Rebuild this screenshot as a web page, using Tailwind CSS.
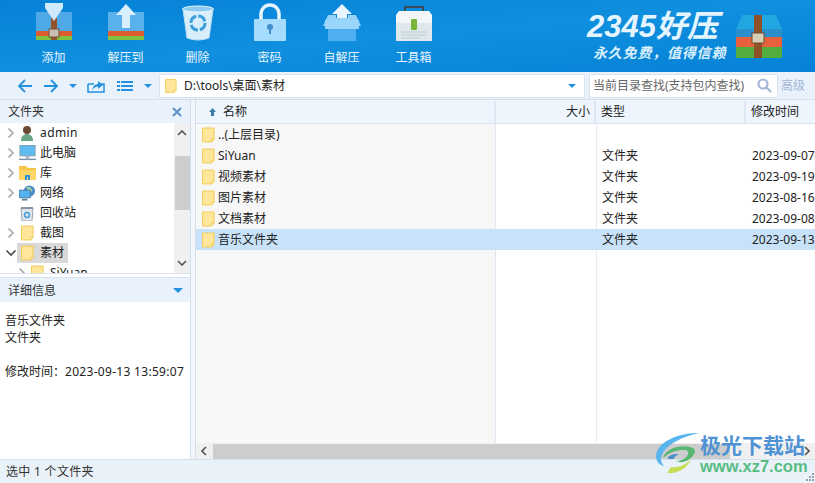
<!DOCTYPE html>
<html lang="zh"><head><meta charset="utf-8">
<script src="https://cdn.jsdelivr.net/npm/@tailwindcss/browser@4"></script>
</head>
<body class="w-[815px] h-[483px] overflow-hidden relative bg-white text-[12px] text-[#1a1a1a] font-['Noto_Sans','Noto_Sans_CJK_SC',sans-serif]">
<svg class="hidden"><defs>
<symbol id="folder" viewBox="0 0 14 16"><path d="M.5.5h12.5v12.5l-2.5 2.5H.5z" fill="#ffe69b" stroke="#f1c94f"/><path d="M10.5 15.5v-3h2.5" fill="#fff3c4" stroke="#f1c94f"/></symbol>
<symbol id="chev" viewBox="0 0 8 12"><path d="M1.5 1.5 6 6l-4.500 4.500" fill="none" stroke="#a6a6a6" stroke-width="1.600"/></symbol>
</defs></svg>
<div class="flex flex-col h-full">
 <!-- toolbar -->
 <header class="h-[72px] bg-linear-to-br from-[#0681d6] via-[#0f8fde] to-[#0681d6] flex pl-[26px] relative shrink-0">
  <div class="w-[55px] flex flex-col items-center"><svg width="38" height="40" viewBox="0 0 38 40" class="mt-[2px]"><rect x="1" y="10" width="36" height="20" fill="#4fa9e6"/><rect x="1" y="29" width="36" height="5" fill="#dc5c2e"/><rect x="1" y="34" width="36" height="4" fill="#7fc241"/><rect x="16" y="16" width="6" height="22" fill="#94522a"/><rect x="14" y="27" width="10" height="8" fill="#c8bfb0" stroke="#70503a"/><path d="M10 1h18v5l-9 13-9-13z" fill="#cfeafc"/></svg><span class="text-[#e9f5fd] leading-[14px] mt-[9px]">添加</span></div>
  <div class="w-[17px]"></div>
  <div class="w-[55px] flex flex-col items-center"><svg width="38" height="40" viewBox="0 0 38 40" class="mt-[2px]"><rect x="1" y="10" width="36" height="20" fill="#58b1ea"/><rect x="1" y="29" width="36" height="5" fill="#dc5c2e"/><rect x="1" y="34" width="36" height="4" fill="#7fc241"/><path d="M19 2l10 11h-6v13h-8V13H9z" fill="#d9effd"/></svg><span class="text-[#e9f5fd] leading-[14px] mt-[9px]">解压到</span></div>
  <div class="w-[17px]"></div>
  <div class="w-[55px] flex flex-col items-center"><svg width="34" height="38" viewBox="0 0 34 38" class="mt-[3px]"><path d="M2 6h30l-4 29q-11 4-22 0z" fill="#d9eefb" stroke="#bfe0f5"/><ellipse cx="17" cy="6" rx="15.500" ry="3" fill="#8ecbf0" stroke="#e6f4fc"/><circle cx="17" cy="20" r="7" fill="none" stroke="#3d9edd" stroke-width="3" stroke-dasharray="9 2"/></svg><span class="text-[#e9f5fd] leading-[14px] mt-[10px]">删除</span></div>
  <div class="w-[17px]"></div>
  <div class="w-[55px] flex flex-col items-center"><svg width="34" height="38" viewBox="0 0 34 38" class="mt-[3px]"><path d="M8 18V11a9 9 0 0 1 18 0v7" fill="none" stroke="#e6f4fc" stroke-width="3.500"/><rect x="1" y="16" width="32" height="22" rx="1" fill="#a5dcfd"/><circle cx="17" cy="24" r="3" fill="#3f8fca"/><rect x="16" y="25" width="2" height="6" fill="#3f8fca"/></svg><span class="text-[#e9f5fd] leading-[14px] mt-[10px]">密码</span></div>
  <div class="w-[17px]"></div>
  <div class="w-[55px] flex flex-col items-center"><svg width="42" height="38" viewBox="0 0 42 38" class="mt-[3px]"><path d="M21 1l10 10h-5v6H16v-6h-5z" fill="#e9f6fe"/><path d="M7 12l-5 11h38l-5-11h-8v3H15v-3z" fill="#94d2fa"/><rect x="7" y="23" width="28" height="15" fill="#4eaeef"/><rect x="4" y="17" width="34" height="9" fill="#9ad6fc"/></svg><span class="text-[#e9f5fd] leading-[14px] mt-[10px]">自解压</span></div>
  <div class="w-[17px]"></div>
  <div class="w-[55px] flex flex-col items-center"><svg width="38" height="38" viewBox="0 0 38 38" class="mt-[3px]"><path d="M10 9V4h18v5" fill="none" stroke="#3c4a5a" stroke-width="2"/><path d="M1 12l3-4h30l3 4v8H1z" fill="#f2f6f8"/><rect x="1" y="20" width="36" height="20" fill="#dfe8ec"/><rect x="16" y="16" width="6" height="11" rx="1" fill="#79b637"/><path d="M6 29h26M6 32h26M6 35h20" stroke="#c0ccd2"/></svg><span class="text-[#e9f5fd] leading-[14px] mt-[10px]">工具箱</span></div>
  <!-- brand -->
  <div class="absolute left-[587px] top-[11px] flex">
    <div class="w-[140px] flex flex-col">
     <span class="text-[#e4f5ff] text-[31px] leading-[32px] font-bold italic whitespace-nowrap font-['Liberation_Sans','Noto_Sans_CJK_SC',sans-serif]">2345好压</span>
     <span class="text-[#d8effd] text-[14px] leading-[18px] mt-[1px] ml-[6px] tracking-[0.8px] font-bold italic whitespace-nowrap">永久免费，值得信赖</span>
    </div>
    <svg width="48" height="46" viewBox="0 0 48 46" class="ml-[8px] mt-[4px]"><path d="M7 0h34l6 14H1z" fill="#20a7e2"/><rect x="1" y="14" width="46" height="9" fill="#2a8fcb"/><rect x="1" y="22" width="46" height="10" rx="1" fill="#e8603c"/><rect x="1" y="32" width="46" height="11" rx="1" fill="#52ad3c"/><rect x="19" y="0" width="8" height="43" fill="#8f5128"/><rect x="17" y="18" width="12" height="10" fill="#d9cfb9" stroke="#6d4a2e"/></svg>
  </div>
 </header>
 <!-- nav -->
 <div class="h-[28px] bg-[#e9f2fb] flex items-center shrink-0 border-b border-[#d5e0ec]">
  <svg width="16" height="14" viewBox="0 0 16 14" class="ml-[17px]" fill="none" stroke="#2490e0" stroke-width="1.800"><path d="M15 7H2M8 1 2 7l6 6"/></svg>
  <svg width="16" height="14" viewBox="0 0 16 14" class="ml-[10px]" fill="none" stroke="#2490e0" stroke-width="1.800"><path d="M1 7h13M8 1l6 6-6 6"/></svg>
  <svg width="8" height="4" viewBox="0 0 8 4" class="ml-[10px]"><path d="M0 0h8L4 4z" fill="#2490e0"/></svg>
  <svg width="18" height="14" viewBox="0 0 18 14" class="ml-[10px]"><path d="M1 5v8h16V5h-3M7 5H1" fill="none" stroke="#2490e0" stroke-width="1.500"/><path d="M5 11c1-4 3-6 6-6V2l5 4-5 4V7.500c-2 0-4 1-6 3.500z" fill="#2490e0"/></svg>
  <svg width="16" height="10" viewBox="0 0 16 10" class="ml-[12px]" fill="#2490e0"><path d="M0 0h3v2H0zM4 0h12v2H4zM0 4h3v2H0zM4 4h12v2H4zM0 8h3v2H0zM4 8h12v2H4z"/></svg>
  <svg width="8" height="4" viewBox="0 0 8 4" class="ml-[11px]"><path d="M0 0h8L4 4z" fill="#2490e0"/></svg>
  <div class="ml-[7px] w-[426px] h-[24px] bg-white border border-[#d8e3ef] flex items-center pl-[5px] pr-[8px]">
   <svg width="12" height="16"><use href="#folder"/></svg>
   <span class="ml-[7px] text-[#222]">D:\tools\桌面\素材</span>
   <svg width="8" height="4" viewBox="0 0 8 4" class="ml-auto"><path d="M0 0h8L4 4z" fill="#2490e0"/></svg>
  </div>
  <div class="ml-[4px] w-[189px] h-[24px] bg-white border border-[#d8e3ef] flex items-center pl-[3px] pr-[5px]">
   <span class="text-[#666] whitespace-nowrap">当前目录查找(支持包内查找)</span>
   <svg width="15" height="15" viewBox="0 0 15 15" class="ml-auto" fill="none" stroke="#a5b6da" stroke-width="2.200"><circle cx="6" cy="6" r="4.500"/><path d="M9.500 9.500 14 14"/></svg>
  </div>
  <span class="ml-[3px] text-[#a3b6d8]">高级</span>
 </div>
 <!-- body -->
 <div class="flex-1 flex min-h-0">
  <aside class="w-[191px] shrink-0 flex flex-col border-r border-[#d3dfec] bg-white">
   <div class="h-[23px] bg-[#e9f2fb] flex items-center justify-between pl-[8px] pr-[8px] pt-[1px] shrink-0"><span class="text-[#333]">文件夹</span><svg width="10" height="10" viewBox="0 0 10 10" stroke="#5b8fc4" stroke-width="2"><path d="M1 1l8 8M9 1 1 9"/></svg></div>
   <div class="h-[150px] flex shrink-0 overflow-hidden">
    <div class="w-[174px] pt-0 overflow-hidden text-[#222]">
     <div class="h-[20px] flex items-center"><svg width="8" height="12" class="ml-[7px]"><use href="#chev"/></svg><svg width="16" height="16" viewBox="0 0 16 16" class="ml-[4px]"><circle cx="8" cy="5" r="4" fill="#6b4a32"/><path d="M2 16c0-5 3-7 6-7s6 2 6 7z" fill="#6aa686"/></svg><span class="ml-[5px] tracking-[0.4px]">admin</span></div>
     <div class="h-[20px] flex items-center"><svg width="8" height="12" class="ml-[7px]"><use href="#chev"/></svg><svg width="17" height="16" viewBox="0 0 18 16" class="ml-[4px]"><rect x="1" y="0" width="16" height="11" fill="#5ebcf0" stroke="#7a9cb8"/><path d="M0 14h18v1.500H0z" fill="#7a93a8"/><path d="M7 11h4v3H7z" fill="#a7b8c6"/></svg><span class="ml-[4px]">此电脑</span></div>
     <div class="h-[20px] flex items-center"><svg width="8" height="12" class="ml-[7px]"><use href="#chev"/></svg><svg width="17" height="14" viewBox="0 0 17 14" class="ml-[4px]"><path d="M0 0h7l2 2h8v12H0z" fill="#f7c548"/><path d="M0 4h17v10H0z" fill="#ffd768"/><path d="M6 9h5v5H9v-3H8v3H6z" fill="#2f8fd8"/></svg><span class="ml-[4px]">库</span></div>
     <div class="h-[20px] flex items-center"><svg width="8" height="12" class="ml-[7px]"><use href="#chev"/></svg><svg width="17" height="16" viewBox="0 0 18 16" class="ml-[4px]"><circle cx="11" cy="6" r="6" fill="#4e8fc8"/><path d="M8 2c3-1 6 1 6 4l-3 2z" fill="#a7d5a0"/><rect x="0" y="5" width="12" height="8" fill="#52b2ee" stroke="#4b7da3"/><path d="M3 15h6" stroke="#5c7f9a" stroke-width="2"/></svg><span class="ml-[4px]">网络</span></div>
     <div class="h-[20px] flex items-center"><svg width="14" height="16" viewBox="0 0 14 16" class="ml-[20px]"><path d="M1 3h12l-1 13H2z" fill="#dfe6ec" stroke="#9aa7b3"/><path d="M1 2h12v2H1z" fill="#8895a1"/><circle cx="7" cy="10" r="2.500" fill="none" stroke="#4a9fdc" stroke-width="1.500"/></svg><span class="ml-[6px]">回收站</span></div>
     <div class="h-[20px] flex items-center"><svg width="8" height="12" class="ml-[7px]"><use href="#chev"/></svg><svg width="13" height="16" class="ml-[6px]"><use href="#folder"/></svg><span class="ml-[6px]">截图</span></div>
     <div class="h-[20px] flex items-center relative"><div class="absolute left-[17px] top-0 w-[51px] h-[20px] bg-[#d9d9d9]"></div><svg width="12" height="8" viewBox="0 0 12 8" class="ml-[5px] relative" fill="none" stroke="#444" stroke-width="1.600"><path d="M1.500 1.500 6 6l4.500-4.500"/></svg><svg width="13" height="16" class="ml-[4px] relative"><use href="#folder"/></svg><span class="ml-[6px] relative">素材</span></div>
     <div class="h-[20px] flex items-center"><svg width="8" height="12" class="ml-[18px]"><use href="#chev"/></svg><svg width="13" height="16" class="ml-[5px]"><use href="#folder"/></svg><span class="ml-[6px]">SiYuan</span></div>
    </div>
    <div class="w-[16px] bg-[#f0f0f0] flex flex-col items-center">
     <svg width="10" height="6" viewBox="0 0 10 6" class="mt-[7px]" fill="none" stroke="#555" stroke-width="1.600"><path d="M1 5l4-4 4 4"/></svg>
     <div class="w-[15px] h-[54px] bg-[#cdcdcd] mt-[20px]"></div>
     <svg width="10" height="6" viewBox="0 0 10 6" class="mt-auto mb-[7px]" fill="none" stroke="#555" stroke-width="1.600"><path d="M1 1l4 4 4-4"/></svg>
    </div>
   </div>
   <div class="h-[5px] border-y border-[#d8e3ef] shrink-0"></div>
   <div class="h-[24px] bg-[#e9f2fb] flex items-center justify-between pl-[8px] pr-[7px] pt-[1px] shrink-0"><span class="text-[#333]">详细信息</span><svg width="10" height="5" viewBox="0 0 10 5"><path d="M0 0h10L5 5z" fill="#2490e0"/></svg></div>
   <div class="pl-[5px] pt-[10px] leading-[17px] text-[#222] whitespace-nowrap"><p>音乐文件夹</p><p>文件夹</p><p class="mt-[17px]">修改时间：<span class="tracking-[0.3px]">2023-09-13 13:59:07</span></p></div>
  </aside>
  <div class="w-[4px] shrink-0 bg-[#f2f6fa]"></div>
  <main class="flex-1 min-w-0 flex flex-col border-l border-[#d3dfec]">
   <div class="h-[24px] shrink-0 flex bg-[#eef5fd] border-b border-[#d8e3ef] text-[#222] pt-[1px]">
    <div class="w-[300px] border-r-2 border-[#dfe8f2] flex items-center pl-[13px]"><svg width="7" height="8" viewBox="0 0 7 8"><path d="M3.500 0 7 4H5v4H2V4H0z" fill="#3a7ba8"/></svg><span class="ml-[7px]">名称</span></div>
    <div class="w-[100px] border-r-2 border-[#dfe8f2] flex items-center justify-end pr-[4px]">大小</div>
    <div class="w-[150px] border-r-2 border-[#dfe8f2] flex items-center pl-[5px]">类型</div>
    <div class="flex-1 flex items-center pl-[5px]">修改时间</div>
   </div>
   <div class="flex-1 min-h-0 flex flex-col relative">
    <div class="absolute left-0 top-0 bottom-0 w-[300px] bg-[#f7f7f7] border-r border-[#dfe8f2]"></div>
    <div class="absolute left-[400px] top-0 bottom-0 w-px bg-[#e4ecf5]"></div>
    <div class="relative text-[#222] overflow-hidden whitespace-nowrap">
     <div class="h-[21px] flex items-center"><div class="w-[300px] flex items-center pl-[6px]"><svg width="13" height="16"><use href="#folder"/></svg><span class="ml-[3px]">..(上层目录)</span></div></div>
     <div class="h-[21px] flex items-center"><div class="w-[300px] flex items-center pl-[6px]"><svg width="13" height="16"><use href="#folder"/></svg><span class="ml-[3px]">SiYuan</span></div><div class="w-[100px]"></div><div class="w-[150px] pl-[6px]">文件夹</div><div class="pl-[6px]">2023-09-07</div></div>
     <div class="h-[21px] flex items-center"><div class="w-[300px] flex items-center pl-[6px]"><svg width="13" height="16"><use href="#folder"/></svg><span class="ml-[3px]">视频素材</span></div><div class="w-[100px]"></div><div class="w-[150px] pl-[6px]">文件夹</div><div class="pl-[6px]">2023-09-19</div></div>
     <div class="h-[21px] flex items-center"><div class="w-[300px] flex items-center pl-[6px]"><svg width="13" height="16"><use href="#folder"/></svg><span class="ml-[3px]">图片素材</span></div><div class="w-[100px]"></div><div class="w-[150px] pl-[6px]">文件夹</div><div class="pl-[6px]">2023-08-16</div></div>
     <div class="h-[21px] flex items-center"><div class="w-[300px] flex items-center pl-[6px]"><svg width="13" height="16"><use href="#folder"/></svg><span class="ml-[3px]">文档素材</span></div><div class="w-[100px]"></div><div class="w-[150px] pl-[6px]">文件夹</div><div class="pl-[6px]">2023-09-08</div></div>
     <div class="h-[21px] flex items-center bg-[#c8e2f9]"><div class="w-[300px] flex items-center pl-[6px]"><svg width="13" height="16"><use href="#folder"/></svg><span class="ml-[3px]">音乐文件夹</span></div><div class="w-[100px]"></div><div class="w-[150px] pl-[6px]">文件夹</div><div class="pl-[6px]">2023-09-13</div></div>
    </div>
    <div class="mt-auto relative h-[16px] bg-[#f0f0f0] flex items-center">
     <svg width="6" height="10" viewBox="0 0 6 10" class="ml-[5px]" fill="none" stroke="#555" stroke-width="1.600"><path d="M5 1 1 5l4 4"/></svg>
     <div class="ml-[6px] w-[517px] h-[15px] bg-[#cdcdcd]"></div>
     <svg width="6" height="10" viewBox="0 0 6 10" class="ml-auto mr-[5px]" fill="none" stroke="#555" stroke-width="1.600"><path d="M1 1l4 4-4 4"/></svg>
    </div>
   </div>
  </main>
 </div>
 <footer class="h-[24px] shrink-0 bg-[#e9f1f9] border-t border-[#d5e0ec] flex items-center pl-[6px] text-[#333]"><span class="tracking-[0.3px]">选中 1 个文件夹</span></footer>
</div>
<!-- resize grip -->
<svg width="9" height="9" viewBox="0 0 9 9" class="absolute right-0 bottom-[1px]" fill="#9aa4ae"><path d="M6 0h2v2H6zM3 3h2v2H3zM6 3h2v2H6zM0 6h2v2H0zM3 6h2v2H3zM6 6h2v2H6z"/></svg>
<!-- watermark -->
<div class="absolute left-[655px] top-[431px] w-[160px] h-[45px] pointer-events-none">
 <svg width="46" height="44" viewBox="0 0 46 44" class="absolute left-0 top-0"><path d="M44 2C24 2 2 10 1 25c0 5 3 9 8 10-3-3-4-7-2-11C11 14 26 6 44 2z" fill="#5ab5ee"/><path d="M8 27c2-8 14-14 27-11 5 1 6 4 4 7-4 7-12 10-18 7 5 0 10-2 12-7 1-3-1-4-4-4-8 0-14 2-21 8z" fill="#56b872"/><path d="M12 42c10 1 20-4 24-14-5 6-13 9-20 8z" fill="#c6dd55"/><path d="M12 27c4-4 9-5 12-3-3 0-5 2-5 4-3 0-5 0-7-1z" fill="#4a8fc9"/></svg>
 <span class="absolute left-[45px] top-[1px] text-[#4f93d4] text-[21px] leading-[26px] font-bold whitespace-nowrap">极光下载站</span>
 <span class="absolute left-[45px] top-[26px] text-[#58bd83] text-[16.500px] leading-[18px] font-bold whitespace-nowrap font-['Liberation_Sans',sans-serif]">www.xz7.com</span>
</div>
</body></html>
